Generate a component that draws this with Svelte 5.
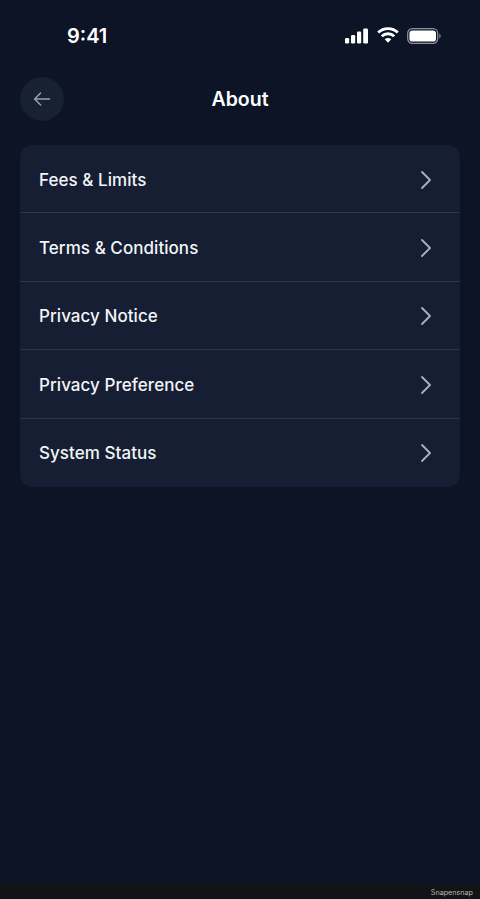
<script>
  const items = ['Fees & Limits', 'Terms & Conditions', 'Privacy Notice', 'Privacy Preference', 'System Status'];
</script>

<div class="page">
  <div class="main">
    <div class="status">
      <span class="time">9:41</span>
      <div class="icons">
        <svg width="24" height="16" viewBox="0 0 24 16" fill="#fff">
          <rect x="0" y="10" width="4.2" height="5.5" rx="1.3"/>
          <rect x="6" y="7" width="4.2" height="8.5" rx="1.3"/>
          <rect x="12" y="3.5" width="4.2" height="12" rx="1.3"/>
          <rect x="18.2" y="0.5" width="4.8" height="15" rx="1.3"/>
        </svg>
        <svg class="wifi" width="22" height="16" viewBox="0 0 22 16" fill="none" stroke="#fff" stroke-width="2.8">
          <path d="M1.2 5.6 C6.6 0.2 15.4 0.2 20.8 5.6"/>
          <path d="M4.8 9.2 C8.2 5.9 13.8 5.9 17.2 9.2"/>
          <path d="M11 15.8 L7.7 12.3 C9.6 10.6 12.4 10.6 14.3 12.3 Z" fill="#fff" stroke="none"/>
        </svg>
        <svg width="34" height="16" viewBox="0 0 34 16" fill="none">
          <rect x="0.7" y="0.7" width="30" height="14.6" rx="4.6" stroke="#8b93a3" stroke-width="1.2"/>
          <rect x="2.4" y="2.4" width="26.6" height="11.2" rx="3.2" fill="#fff"/>
          <path d="M32.4 5.6 C33.3 6 33.6 7 33.6 8 C33.6 9 33.3 10 32.4 10.4 Z" fill="#8b93a3"/>
        </svg>
      </div>
    </div>

    <header class="nav">
      <button class="back" aria-label="Back">
        <svg width="20" height="20" viewBox="0 0 20 20" fill="none" stroke="#99a1b1" stroke-width="1.5" stroke-linecap="round" stroke-linejoin="round">
          <path d="M17.5 10 H2.8 M8.6 4 L2.6 10 L8.6 16"/>
        </svg>
      </button>
      <h1>About</h1>
    </header>

    <ul class="card">
      {#each items as item}
        <li class="row">
          <span>{item}</span>
          <svg width="12" height="20" viewBox="0 0 12 20" fill="none" stroke="#a8b2c6" stroke-width="1.8" stroke-linecap="round" stroke-linejoin="round">
            <path d="M2 2 L10 10 L2 18"/>
          </svg>
        </li>
      {/each}
    </ul>
  </div>
  <footer class="credit">Snapensnap</footer>
</div>

<style>
  :global(body) {
    margin: 0;
    background: #0c1426;
  }
  .page {
    width: 480px;
    height: 899px;
    display: flex;
    flex-direction: column;
    font-family: Inter, "Liberation Sans", sans-serif;
    color: #fff;
    overflow: hidden;
  }
  .main {
    flex: 1;
    padding: 0 20px;
    background: #0c1426;
  }
  .status {
    height: 71px;
    display: flex;
    align-items: center;
    justify-content: space-between;
    padding: 0 20px 0 47px;
    margin-right: -1px;
  }
  .time {
    font-size: 20px;
    font-weight: 600;
  }
  .icons {
    display: flex;
    align-items: center;
    gap: 8px;
  }
  .wifi {
    margin-top: -1px;
  }
  .nav {
    position: relative;
    height: 44px;
    margin-top: 6px;
    display: flex;
    align-items: center;
    justify-content: center;
  }
  .back {
    position: absolute;
    left: 0;
    top: 0;
    width: 44px;
    height: 44px;
    border: 0;
    padding: 0;
    border-radius: 50%;
    background: #172131;
    display: flex;
    align-items: center;
    justify-content: center;
  }
  .back svg {
    margin-left: -1px;
  }
  h1 {
    margin: 0;
    font-size: 19.5px;
    font-weight: 600;
    line-height: 44px;
  }
  .card {
    list-style: none;
    margin: 24px 0 0;
    padding: 0;
    background: #151e32;
    border-radius: 12px;
    overflow: hidden;
  }
  .row {
    box-sizing: border-box;
    height: 68.4px;
    display: flex;
    align-items: center;
    justify-content: space-between;
    padding: 2px 28px 0 19px;
    font-size: 17px;
    font-weight: 450;
    letter-spacing: 0.05px;
    color: #f3f5f8;
    border-bottom: 1px solid #2c3646;
  }
  .row:last-child {
    border-bottom: 1px solid transparent;
  }
  .credit {
    height: 15px;
    background: #121316;
    color: #b9b9b9;
    font-size: 7.2px;
    line-height: 17px;
    text-align: right;
    padding-right: 7px;
  }
</style>
